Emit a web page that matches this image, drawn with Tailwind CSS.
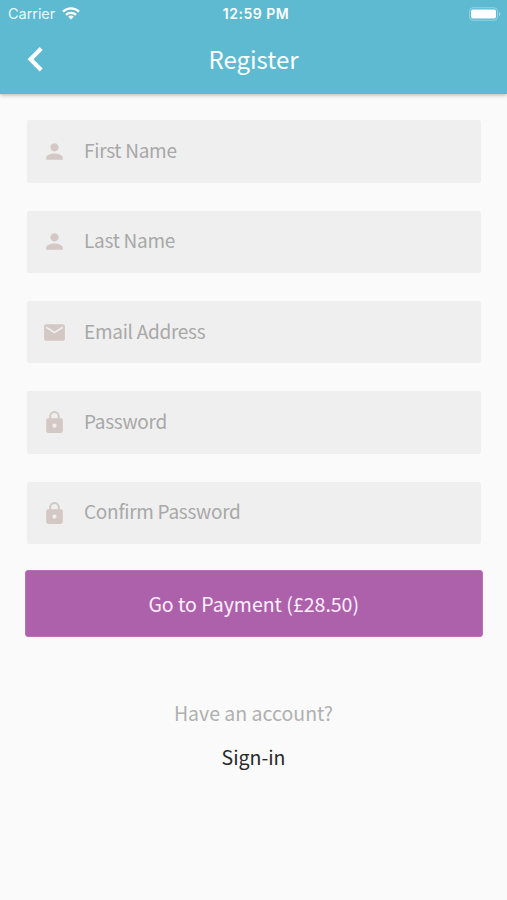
<!DOCTYPE html>
<html lang="en">
<head>
<meta charset="utf-8">
<title>Register</title>
<script src="https://cdn.jsdelivr.net/npm/@tailwindcss/browser@4"></script>
</head>
<body class="h-[900px] overflow-hidden bg-[#fafafa] font-['Noto_Sans_CJK_JP','Open_Sans',sans-serif]">
<header class="relative h-[94px] bg-[#5dbad1] text-white shadow-[0_1px_4px_rgba(0,0,0,0.3)]">
  <div class="grid h-7 grid-cols-3 items-center pl-2 pr-[6px] font-['Inter',sans-serif] leading-7">
    <div class="flex items-center gap-[7px] text-[#e9f9fc]"><span class="text-[14.5px] -tracking-[0.05px]">Carrier</span>
      <svg class="-mt-[2px] h-[13px] w-[18px]" viewBox="0 0 18 13" fill="none" stroke="white" stroke-width="2.3"><path d="M1 4.700a11.500 11.500 0 0 1 16 0M4 7.800a7.200 7.200 0 0 1 10 0"/><path d="M9 12.600 6.200 9.800a4 4 0 0 1 5.600 0z" fill="white" stroke="none"/></svg>
    </div>
    <div class="pl-[3px] text-center text-[14px] font-semibold tracking-[0.5px]">12:59 PM</div>
    <div class="flex justify-end"><svg class="-mt-px h-[14px] w-[33px]" viewBox="0 0 33 14"><rect x="1.5" y=".7" width="28" height="12.6" rx="3.5" fill="none" stroke="#8fd3e3"/><rect x="3" y="2.5" width="25" height="9" rx="1.8" fill="white"/><path d="M31 5v4q1.300-.6 1.300-2T31 5z" fill="#9cdbe9"/></svg></div>
  </div>
  <div class="grid h-[62.5px] grid-cols-3 items-center">
    <svg class="ml-[27px] h-[26px] w-[17px]" viewBox="0 0 17 26" fill="none" stroke="white" stroke-width="4.2"><path d="M14.200 2.500 3.500 13.200 14.200 23.900"/></svg>
    <h1 class="text-center text-[24px] leading-[62px]">Register</h1>
  </div>
</header>
<main class="px-[25px] pt-[26.2px]">
  <form class="flex flex-col gap-[27.9px] pl-[2px] pr-px text-[19px] -tracking-[0.28px] text-[#a8a8a8]">
    <div class="flex h-[62.5px] items-center rounded-xs bg-[#efefef] pl-[15px]"><svg class="mr-[17px] size-[25px] shrink-0 fill-[#d3c8c4]" viewBox="0 0 24 24"><path d="M12 12c2.210 0 4-1.790 4-4s-1.790-4-4-4-4 1.790-4 4 1.790 4 4 4zm0 2c-2.670 0-8 1.340-8 4v2h16v-2c0-2.660-5.330-4-8-4z"/></svg><span class="-mt-[3px]">First Name</span></div>
    <div class="flex h-[62.5px] items-center rounded-xs bg-[#efefef] pl-[15px]"><svg class="mr-[17px] size-[25px] shrink-0 fill-[#d3c8c4]" viewBox="0 0 24 24"><path d="M12 12c2.210 0 4-1.790 4-4s-1.790-4-4-4-4 1.790-4 4 1.790 4 4 4zm0 2c-2.670 0-8 1.340-8 4v2h16v-2c0-2.660-5.330-4-8-4z"/></svg><span class="-mt-[3px]">Last Name</span></div>
    <div class="flex h-[62.5px] items-center rounded-xs bg-[#efefef] pl-[15px]"><svg class="mr-[17px] size-[25px] shrink-0 fill-[#d3c8c4]" viewBox="0 0 24 24"><path d="M20 4H4c-1.100 0-2 .9-2 2v12c0 1.100.9 2 2 2h16c1.100 0 2-.9 2-2V6c0-1.100-.9-2-2-2zm0 4-8 5-8-5V6l8 5 8-5v2z"/></svg><span class="-mt-[2px]">Email Address</span></div>
    <div class="flex h-[62.5px] items-center rounded-xs bg-[#efefef] pl-[15px]"><svg class="mr-[17px] size-[25px] shrink-0 fill-[#d3c8c4]" viewBox="0 0 24 24"><path d="M18 8h-1V6c0-2.760-2.240-5-5-5S7 3.240 7 6v2H6c-1.100 0-2 .9-2 2v10c0 1.100.9 2 2 2h12c1.100 0 2-.9 2-2V10c0-1.100-.9-2-2-2zm-6 9c-1.100 0-2-.9-2-2s.9-2 2-2 2 .9 2 2-.9 2-2 2zM8.900 8V6a3.100 3.100 0 0 1 6.200 0v2z"/></svg><span class="-mt-[2px]">Password</span></div>
    <div class="flex h-[62.5px] items-center rounded-xs bg-[#efefef] pl-[15px]"><svg class="mr-[17px] size-[25px] shrink-0 fill-[#d3c8c4]" viewBox="0 0 24 24"><path d="M18 8h-1V6c0-2.760-2.240-5-5-5S7 3.240 7 6v2H6c-1.100 0-2 .9-2 2v10c0 1.100.9 2 2 2h12c1.100 0 2-.9 2-2V10c0-1.100-.9-2-2-2zm-6 9c-1.100 0-2-.9-2-2s.9-2 2-2 2 .9 2 2-.9 2-2 2zM8.900 8V6a3.100 3.100 0 0 1 6.200 0v2z"/></svg><span class="-mt-[3px]">Confirm Password</span></div>
  </form>
  <button class="mt-[25.7px] flex h-[67px] w-[457.500px] items-center justify-center rounded-[3px] border border-[#bb72b8] bg-[#ad61ab] text-[19.5px] text-[#fff0ff]">Go to Payment (£28.50)</button>
  <div class="mt-[54px] text-center text-[19.5px] text-[#b0b0b0]"><p class="leading-[44px]">Have an account?</p><a class="block leading-[44px] text-[#292929]">Sign-in</a></div>
</main>
</body>
</html>
